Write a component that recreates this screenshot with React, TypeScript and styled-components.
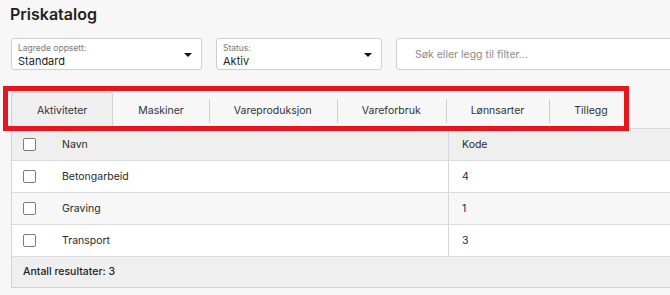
import React from "react";
import styled, { createGlobalStyle } from "styled-components";

const GlobalStyle = createGlobalStyle`
  html, body {
    margin: 0;
    padding: 0;
    background: #f7f7f7;
  }
  body {
    font-family: Inter, "Noto Sans", "Liberation Sans", sans-serif;
    color: #222;
    overflow: hidden;
  }
`;

const Page = styled.div`
  width: 670px;
  height: 295px;
  padding: 4px 0 0 11px;
  box-sizing: border-box;
  background: #f7f7f7;
  overflow: hidden;
`;

const Title = styled.h1`
  margin: 0 0 0 -1px;
  font-size: 16px;
  line-height: 20px;
  font-weight: 600;
  color: #1f1f1f;
`;

const Filters = styled.div`
  display: flex;
  gap: 14px;
  margin-top: 14px;
`;

const Select = styled.div<{ $width: number }>`
  width: ${(p) => p.$width}px;
  height: 32px;
  box-sizing: border-box;
  background: #fff;
  border: 1px solid #cfcfcf;
  border-radius: 3px;
  padding: 2px 6px 0;
  display: flex;
  align-items: center;
  flex-shrink: 0;
`;

const SelectText = styled.div`
  flex: 1;
  display: flex;
  flex-direction: column;
`;

const SelectLabel = styled.span`
  font-size: 8.5px;
  line-height: 11px;
  color: #7a7a7a;
`;

const SelectValue = styled.span`
  font-size: 11px;
  line-height: 14px;
  color: #1f1f1f;
`;

const Caret = styled.span`
  width: 0;
  height: 0;
  border-left: 4px solid transparent;
  border-right: 4px solid transparent;
  border-top: 4.5px solid #111;
  margin-right: 3px;
`;

const Search = styled.div`
  width: 300px;
  height: 32px;
  box-sizing: border-box;
  background: #fff;
  border: 1px solid #cfcfcf;
  border-radius: 3px;
  padding-left: 18px;
  display: flex;
  align-items: center;
  font-size: 10.5px;
  color: #8a8a8a;
  flex-shrink: 0;
`;

const TabArea = styled.div`
  position: relative;
  margin-top: 22px;
`;

const TabBar = styled.div`
  display: flex;
  height: 36px;
  border-bottom: 1px solid #dadada;
`;

const Tab = styled.div<{ $active?: boolean; $divider?: boolean }>`
  position: relative;
  padding: 0 ${(p) => (p.$active ? "25px" : "24px")};
  display: flex;
  align-items: center;
  font-size: 10.5px;
  color: #333;
  white-space: nowrap;
  box-sizing: border-box;
  background: ${(p) => (p.$active ? "#efefef" : "transparent")};
  border: 1px solid ${(p) => (p.$active ? "#d2d2d2" : "transparent")};
  border-bottom: none;
  border-radius: 3px 3px 0 0;

  &::before {
    content: "";
    display: ${(p) => (p.$divider ? "block" : "none")};
    position: absolute;
    left: -1px;
    top: 6px;
    height: 24px;
    width: 1px;
    background: #d0d0d0;
  }
`;

const Highlight = styled.div`
  position: absolute;
  left: -8px;
  top: -6px;
  width: 626px;
  height: 45px;
  box-sizing: border-box;
  border: 5px solid #e5161d;
  pointer-events: none;
`;

const Table = styled.div`
  border-left: 1px solid #d4d4d4;
  border-bottom: 1px solid #cfcfcf;
  font-size: 10.5px;
`;

const Row = styled.div<{ $bg: string }>`
  display: grid;
  grid-template-columns: 50px 386px 1fr;
  height: 31px;
  background: ${(p) => p.$bg};
  border-bottom: 1px solid #dcdcdc;
`;

const Cell = styled.div<{ $divider?: boolean }>`
  display: flex;
  align-items: center;
  color: #2a2a2a;
  padding-left: ${(p) => (p.$divider ? "13px" : "0")};
  border-left: ${(p) => (p.$divider ? "1px solid #d6d6d6" : "none")};
`;

const CheckCell = styled.div`
  display: flex;
  align-items: center;
  padding-left: 11px;
`;

const Checkbox = styled.span`
  width: 13px;
  height: 13px;
  box-sizing: border-box;
  border: 1px solid #7c7c7c;
  border-radius: 2px;
  background: #fff;
`;

const Footer = styled.div`
  height: 30px;
  display: flex;
  align-items: center;
  padding-left: 11px;
  padding-bottom: 1px;
  box-sizing: border-box;
  background: #efefef;
  font-weight: 500;
  color: #222;
`;

const tabs = [
  "Aktiviteter",
  "Maskiner",
  "Vareproduksjon",
  "Vareforbruk",
  "Lønnsarter",
  "Tillegg",
];

const rows = [
  { name: "Betongarbeid", code: "4" },
  { name: "Graving", code: "1" },
  { name: "Transport", code: "3" },
];

export default function App() {
  return (
    <Page>
      <GlobalStyle />
      <Title>Priskatalog</Title>
      <Filters>
        <Select $width={191}>
          <SelectText>
            <SelectLabel>Lagrede oppsett:</SelectLabel>
            <SelectValue>Standard</SelectValue>
          </SelectText>
          <Caret />
        </Select>
        <Select $width={166}>
          <SelectText>
            <SelectLabel>Status:</SelectLabel>
            <SelectValue>Aktiv</SelectValue>
          </SelectText>
          <Caret />
        </Select>
        <Search>Søk eller legg til filter...</Search>
      </Filters>
      <TabArea>
        <TabBar>
          {tabs.map((t, i) => (
            <Tab key={t} $active={i === 0} $divider={i > 1}>
              {t}
            </Tab>
          ))}
        </TabBar>
        <Highlight />
      </TabArea>
      <Table>
        <Row $bg="#efefef">
          <CheckCell>
            <Checkbox />
          </CheckCell>
          <Cell>Navn</Cell>
          <Cell $divider>Kode</Cell>
        </Row>
        {rows.map((r, i) => (
          <Row key={r.name} $bg={i % 2 === 1 ? "#f7f7f7" : "#ffffff"}>
            <CheckCell>
              <Checkbox />
            </CheckCell>
            <Cell>{r.name}</Cell>
            <Cell $divider>{r.code}</Cell>
          </Row>
        ))}
        <Footer>Antall resultater: 3</Footer>
      </Table>
    </Page>
  );
}
